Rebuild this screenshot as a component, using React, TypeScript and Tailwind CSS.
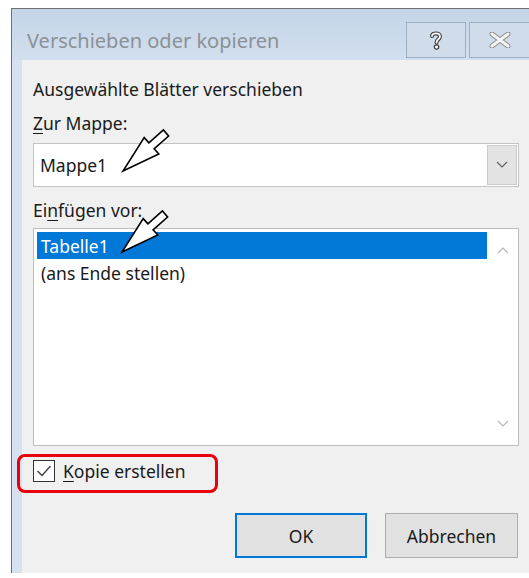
import React from 'react'

const font = "font-['Segoe_UI','Noto_Sans',sans-serif]"

// hollow pointer arrow, tip at bottom-left
const arrow = (dx: number, dy: number) => {
  const pts = [
    [123, 171],
    [158.8, 154],
    [154.1, 148.8],
    [168.6, 136],
    [163.4, 130],
    [148.9, 142.8],
    [144.2, 137.6]
  ]
  return pts.map(([x, y]) => `${x + dx},${y + dy}`).join(' ')
}

const Chevron = ({ up = false, color = '#606060' }: { up?: boolean; color?: string }) => (
  <svg width="12" height="8" viewBox="0 0 12 8">
    <polyline
      points={up ? '1,7 6,2 11,7' : '1,1 6,6 11,1'}
      fill="none"
      stroke={color}
      strokeWidth="1.2"
    />
  </svg>
)

const App: React.FC = () => {
  return (
    <div className={`relative h-[578px] w-[529px] overflow-hidden bg-white ${font}`}>
      <div className="ml-[11px] mt-[8px] w-[540px] border-l border-t border-[#6f6f6f] bg-[#d6e2f0]">
        {/* Title bar */}
        <div className="flex h-[51px] bg-gradient-to-b from-[#c4d4e7] to-[#d2dfee]">
          <div className="mt-[19px] pl-[15px] text-[20px] leading-[26px] text-[#8b9196]">
            Verschieben oder kopieren
          </div>
          <div className="ml-auto mr-[20px] mt-[13px] flex h-[36px] gap-[3px]">
            <div className="flex w-[60px] items-center justify-center border border-[#9eafc3] bg-[#d0dcea]">
              <svg width="16" height="20" viewBox="0 0 16 20">
                <path
                  d="M4 6 C4 2.5 12 2.5 12 6.5 C12 9 8.5 9.5 8.5 12.5"
                  fill="none"
                  stroke="#3a3a3a"
                  strokeWidth="4"
                  strokeLinecap="round"
                />
                <path
                  d="M4 6 C4 2.5 12 2.5 12 6.5 C12 9 8.5 9.5 8.5 12.5"
                  fill="none"
                  stroke="#ffffff"
                  strokeWidth="1.8"
                  strokeLinecap="round"
                />
                <circle cx="8.5" cy="17" r="2.2" fill="#ffffff" stroke="#3a3a3a" strokeWidth="1.2" />
              </svg>
            </div>
            <div className="flex w-[62px] items-center justify-center border border-[#9eafc3] bg-[#d0dcea]">
              <svg width="22" height="16" viewBox="0 0 22 16">
                <path d="M3 2 L19 14 M19 2 L3 14" stroke="#8a8a8a" strokeWidth="5" strokeLinecap="round" />
                <path d="M3 2 L19 14 M19 2 L3 14" stroke="#f4f4f4" strokeWidth="3" strokeLinecap="round" />
              </svg>
            </div>
          </div>
        </div>

        {/* Dialog body */}
        <div className="ml-[10px] flex h-[513px] flex-col bg-[#f0f0f0] pl-[11px] text-[17.5px] leading-[24px] text-[#1a1a1a]">
          <div className="mt-[17px]">Ausgewählte Blätter verschieben</div>
          <div className="mt-[10px]">
            <span className="underline underline-offset-[3px]">Z</span>ur Mappe:
          </div>

          <div className="mt-[8px] flex h-[44px] w-[486px] border border-[#c4c4c4] bg-white">
            <div className="flex flex-1 items-center pl-[6px]">Mappe1</div>
            <div className="m-[1px] flex w-[30px] items-center justify-center border border-[#cccccc] bg-[#e3e3e3]">
              <Chevron />
            </div>
          </div>

          <div className="mt-[11px]">
            Ei<span className="underline underline-offset-[3px]">n</span>fügen vor:
          </div>

          <div className="mt-[6px] flex h-[218px] w-[486px] border border-[#bdbdbd] bg-white p-[3px] pr-0">
            <div className="flex-1">
              <div className="flex h-[27px] items-center bg-[#0078d7] pl-[4px] text-white">Tabelle1</div>
              <div className="flex h-[27px] items-center pl-[4px]">(ans Ende stellen)</div>
            </div>
            <div className="flex w-[31px] flex-col items-center justify-between py-[14px]">
              <Chevron up color="#b8b8b8" />
              <Chevron color="#b8b8b8" />
            </div>
          </div>

          <div className="mt-[13px] flex items-center">
            <div className="flex h-[22px] w-[22px] items-center justify-center border border-[#333333] bg-white">
              <svg width="16" height="14" viewBox="0 0 16 14">
                <polyline points="1.5,7 6,11.5 14.5,2" fill="none" stroke="#404040" strokeWidth="1.4" />
              </svg>
            </div>
            <div className="ml-[8px]">
              <span className="underline underline-offset-[3px]">K</span>opie erstellen
            </div>
          </div>

          <div className="mt-[30px] flex gap-[18px] pl-[202px]">
            <button className="h-[45px] w-[132px] border-2 border-[#0078d7] bg-[#e1e1e1] text-[17.5px]">OK</button>
            <button className="h-[45px] w-[133px] border border-[#adadad] bg-[#e1e1e1] text-[17.5px]">
              Abbrechen
            </button>
          </div>
        </div>
      </div>

      {/* Annotation: red frame around the checkbox */}
      <div className="absolute left-[17px] top-[454px] h-[39px] w-[201px] rounded-[8px] border-[3px] border-[#e8000c]" />

      {/* Annotation arrows */}
      <svg className="pointer-events-none absolute inset-0" width="529" height="578">
        <polygon points={arrow(0, 0)} fill="#ffffff" stroke="#000000" strokeWidth="1.6" strokeLinejoin="miter" />
        <polygon points={arrow(-1, 81)} fill="#ffffff" stroke="#000000" strokeWidth="1.6" strokeLinejoin="miter" />
      </svg>
    </div>
  )
}

export default App
